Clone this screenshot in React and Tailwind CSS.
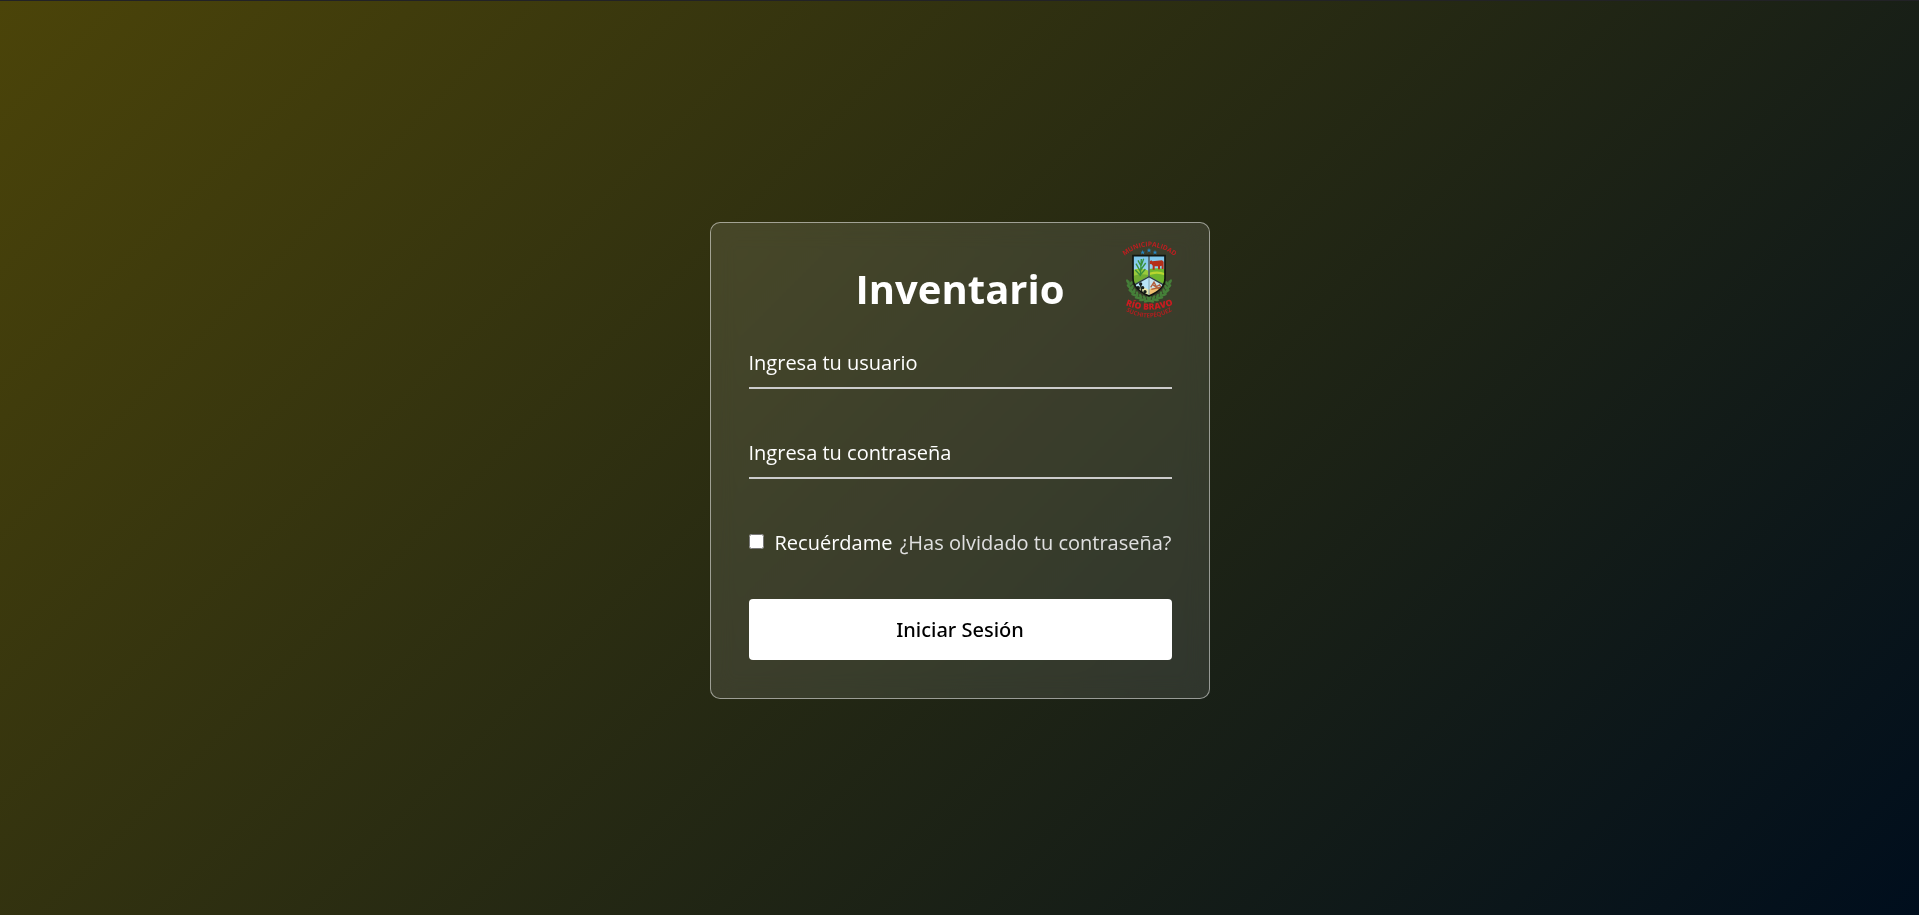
import { useState } from "react";

const LEAF_ANGLES = [0, 13, 26, 39, 52, 65, 78];

export default function App() {
  const [user, setUser] = useState("");
  const [password, setPassword] = useState("");

  return (
    <main className="flex min-h-screen items-center justify-center border-t border-[#222226] bg-[linear-gradient(135deg,#4b4409,#000e1d)] px-3 pt-[5px] font-['Open_Sans',sans-serif] text-xl/7 text-white">
      <div className="relative w-full max-w-[500px] rounded-[10px] border border-white/50 bg-white/10 pt-[39px] pr-[37px] pb-[38px] pl-[38px] text-center backdrop-blur-md">
        <Crest className="absolute top-[17px] right-[33px] h-20 w-[54px] overflow-visible" />
        <form className="flex flex-col" onSubmit={(e) => e.preventDefault()}>
          <h1 className="mb-[2px] text-[40px]/[54px] font-bold">Inventario</h1>
          <Field id="user" type="text" label="Ingresa tu usuario" value={user} onChange={setUser} />
          <Field
            id="password"
            type="password"
            label="Ingresa tu contraseña"
            value={password}
            onChange={setPassword}
          />
          <div className="mt-[31px] mb-[42px] flex items-center justify-between">
            <label htmlFor="remember" className="flex items-center">
              <input id="remember" type="checkbox" className="mr-[11px] mb-1 size-[15px]" />
              Recuérdame
            </label>
            <a href="#" className="text-[#e0e0e0] hover:underline">
              ¿Has olvidado tu contraseña?
            </a>
          </div>
          <button
            type="submit"
            className="h-[61px] rounded-[4px] bg-white font-['Noto_Sans',sans-serif] font-medium text-black"
          >
            Iniciar Sesión
          </button>
        </form>
      </div>
    </main>
  );
}

function Field({ id, type, label, value, onChange }) {
  return (
    <div className="my-[19px] grid items-center border-b-2 border-[#cccccc]">
      <label
        htmlFor={id}
        className={
          value ? "invisible col-start-1 row-start-1 text-left" : "col-start-1 row-start-1 pt-[2px] text-left"
        }
      >
        {label}
      </label>
      <input
        id={id}
        type={type}
        value={value}
        onChange={(e) => onChange(e.target.value)}
        className="col-start-1 row-start-1 h-[50px] w-full bg-transparent outline-none"
      />
    </div>
  );
}

function Laurel() {
  return (
    <g fill="#457f39">
      <path d="M56 152C54 184 76 208 122 214" fill="none" stroke="#457f39" strokeWidth="4" />
      {LEAF_ANGLES.map((a) => (
        <g key={a} transform={`rotate(${-a} 117 150)`}>
          <ellipse cx="54" cy="156" rx="4" ry="9" transform="rotate(-32 54 156)" />
          <ellipse cx="63" cy="160" rx="4" ry="8" transform="rotate(32 63 160)" />
        </g>
      ))}
    </g>
  );
}

function Crest({ className }) {
  return (
    <svg viewBox="36 30 162 240" className={className} role="img" aria-label="Municipalidad Río Bravo">
      <defs>
        <path id="arc-top" d="M43 78Q118 20 194 79" />
        <path id="arc-name" d="M44 225Q117 254 192 223" />
        <path id="arc-region" d="M44 241Q117 285 190 240" />
        <clipPath id="shield">
          <path d="M69 77H165V145C165 173 145 187 117 198C89 187 69 173 69 145Z" />
        </clipPath>
        <linearGradient id="sky" x1="0" y1="0" x2="0" y2="1">
          <stop offset="0" stopColor="#79c5ea" />
          <stop offset="1" stopColor="#d5effa" />
        </linearGradient>
      </defs>

      <g fill="#c01d20" fontFamily="Open Sans, sans-serif" fontWeight="700" textAnchor="middle">
        <text fontSize="20">
          <textPath href="#arc-top" startOffset="50%">MUNICIPALIDAD</textPath>
        </text>
      </g>
      <g fill="#2587c4">
        <Star x={98} y={67} />
        <Star x={117} y={61} />
        <Star x={135} y={67} />
      </g>

      <Laurel />
      <g transform="matrix(-1 0 0 1 234 0)">
        <Laurel />
      </g>

      <g clipPath="url(#shield)">
        <rect x="69" y="77" width="96" height="122" fill="url(#sky)" />
        {/* fields */}
        <path d="M69 120Q92 112 117 122V145L69 170Z" fill="#9acb3c" />
        <path d="M69 138Q92 128 117 136V145L69 170Z" fill="#72ad32" />
        <path d="M117 117Q142 112 166 118V168L117 142Z" fill="#6fb52d" />
        <path d="M117 128Q146 120 166 130V136Q140 126 117 136Z" fill="#b9d62f" />
        {/* cane */}
        <g stroke="#39913b" strokeWidth="4" fill="none">
          <path d="M91 139L94 87M91 124L78 101M92 120L107 99M90 135L76 120M92 134L106 117M93 108L84 91M94 106L101 86" />
        </g>
        {/* cow */}
        <path
          d="M119 94L124 91L127 94L156 91L161 95V117H155V107L150 109V118H144V109H134V119H128V107L125 103L119 102Z"
          fill="#b62f19"
        />
        {/* lower quarters */}
        <path d="M69 165L117 139V200H69Z" fill="#b9e4f6" />
        <path d="M165 165L117 139V200H165Z" fill="#c7e3ee" />
        <path d="M69 176Q94 164 117 180V200H69Z" fill="#e9e8ad" />
        <path d="M117 178Q144 166 166 176V200H117Z" fill="#f1bf70" />
        <g fill="#17201c">
          <circle cx="92" cy="162" r="5" />
          <circle cx="84" cy="174" r="6" />
          <circle cx="98" cy="173" r="5" />
          <circle cx="105" cy="185" r="5" />
          <path d="M89 161H93L98 188H94Z" />
        </g>
        <g stroke="#b25f3d" strokeWidth="4" fill="none">
          <path d="M122 172L132 156L139 170L149 165L154 174M124 178L150 172M128 164L149 178" />
        </g>
        <path d="M117 77V142" stroke="#52646b" strokeWidth="5" />
        <path d="M117 142V200" stroke="#7fa6b4" strokeWidth="3" />
        <path d="M67 168L117 140L167 168" stroke="#2c3c42" strokeWidth="4" fill="none" />
      </g>
      <path
        d="M69 77H165V145C165 173 145 187 117 198C89 187 69 173 69 145Z"
        fill="none"
        stroke="#10150f"
        strokeWidth="5"
      />

      <g fill="#cb1b20" fontFamily="Open Sans, sans-serif" fontWeight="700" textAnchor="middle">
        <text fontSize="26" fontWeight="800">
          <textPath href="#arc-name" startOffset="50%">RÍO BRAVO</textPath>
        </text>
        <text fontSize="18" fill="#ae1f20">
          <textPath href="#arc-region" startOffset="50%">SUCHITEPÉQUEZ</textPath>
        </text>
      </g>
    </svg>
  );
}

function Star({ x, y }) {
  return (
    <path
      transform={`translate(${x} ${y})`}
      d="M0-7L2-2L7-2L3 1L5 7L0 3L-5 7L-3 1L-7-2L-2-2Z"
    />
  );
}
